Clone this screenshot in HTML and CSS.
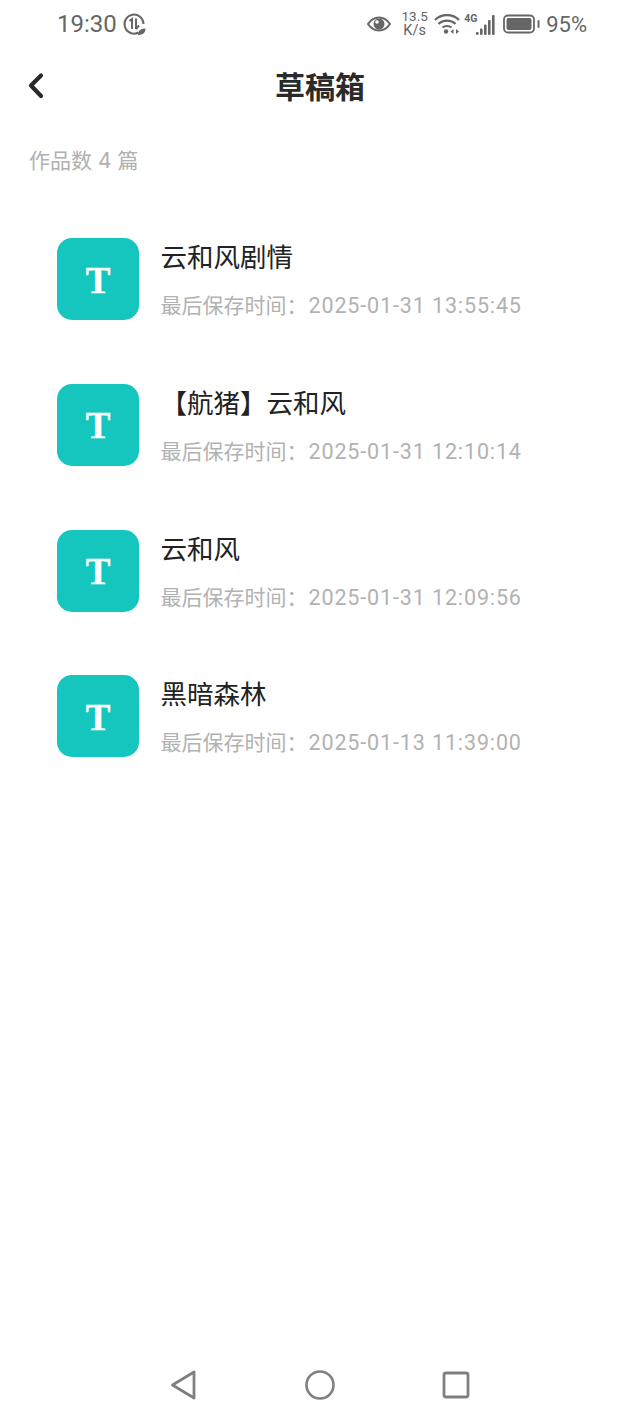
FILE: index.html
```html
<!DOCTYPE html>
<html lang="zh">
<head>
<meta charset="utf-8">
<title>草稿箱</title>
<link rel="stylesheet" href="styles.css">
</head>
<body>
<div class="page">
  <div class="status">
    <div class="status-left">
      <span class="time">19:30</span>
      <svg class="ic-clock" width="24" height="24" viewBox="0 0 24 24"><path d="M16.500 20.500A9.500 9.500 0 1 1 21.500 12" fill="none" stroke="#666" stroke-width="2"/><path d="M7.500 9l2.500-2V17M14 6.500V17M14 17l3-3.500" fill="none" stroke="#666" stroke-width="2"/><path d="M16 23c0-4.500 3-6.500 7.500-6.500 0 4.500-3 6.500-7.500 6.500z" fill="#666"/></svg>
    </div>
    <div class="status-right">
      <svg class="ic-eye" width="26" height="18" viewBox="0 0 26 18"><path d="M2 9C5 4.500 8.500 2.500 13 2.500S21 4.500 24 9C21 13.500 17.500 15.500 13 15.500S5 13.500 2 9z" fill="none" stroke="#666" stroke-width="2"/><circle cx="13" cy="9" r="5.500" fill="#666"/><circle cx="11" cy="7" r="1.800" fill="#fff"/></svg>
      <span class="speed"><span class="speed-val">13.5</span><span class="speed-unit">K/s</span></span>
      <svg class="ic-wifi" width="26" height="24" viewBox="0 0 26 24"><path d="M1 8C7 1.500 19 1.500 25 8M4.500 12C9 7.500 17 7.500 21.500 12M8.500 15.500C11 13.500 15 13.500 17.500 15.500" fill="none" stroke="#666" stroke-width="2.200"/><circle cx="12" cy="19.500" r="2.200" fill="#666"/><path d="M16.500 19.500l3-2.500v5zM25 19.500l-3-2.500v5z" fill="#666"/></svg>
      <span class="net">
        <span class="net-label">4G</span>
        <svg width="20" height="21" viewBox="0 0 20 21"><g fill="#666"><rect x="0" y="17" width="2.600" height="3" rx="1"/><rect x="4" y="13.500" width="2.600" height="6.500" rx="1"/><rect x="8" y="9.500" width="2.600" height="10.500" rx="1"/><rect x="12" y="5" width="2.600" height="15" rx="1"/><rect x="16" y="0" width="2.600" height="20" rx="1"/></g></svg>
      </span>
      <svg class="ic-batt" width="37" height="20" viewBox="0 0 37 20"><rect x="1" y="1.500" width="30" height="17" rx="4" fill="none" stroke="#666" stroke-width="1.800"/><rect x="3.500" y="4" width="25" height="12" rx="2" fill="#666"/><rect x="34.500" y="6" width="2" height="8" rx="1" fill="#666"/></svg>
      <span class="batt">95%</span>
    </div>
  </div>

  <header class="nav">
    <svg class="back" width="18" height="28" viewBox="0 0 18 28"><path d="M14 3.500L4 13.500L14 24" fill="none" stroke="#2a2a2a" stroke-width="4.200" stroke-linecap="round" stroke-linejoin="round"/></svg>
    <h1 class="title">草稿箱</h1>
  </header>

  <p class="count">作品数 4 篇</p>

  <ul class="list">
    <li class="item">
      <div class="thumb">T</div>
      <div class="info"><div class="name">云和风剧情</div><div class="meta">最后保存时间：<span class="stamp">2025-01-31 13:55:45</span></div></div>
    </li>
    <li class="item">
      <div class="thumb">T</div>
      <div class="info"><div class="name">【航猪】云和风</div><div class="meta">最后保存时间：<span class="stamp">2025-01-31 12:10:14</span></div></div>
    </li>
    <li class="item">
      <div class="thumb">T</div>
      <div class="info"><div class="name">云和风</div><div class="meta">最后保存时间：<span class="stamp">2025-01-31 12:09:56</span></div></div>
    </li>
    <li class="item">
      <div class="thumb">T</div>
      <div class="info"><div class="name">黑暗森林</div><div class="meta">最后保存时间：<span class="stamp">2025-01-13 11:39:00</span></div></div>
    </li>
  </ul>

  <div class="softnav">
    <svg width="28" height="32" viewBox="0 0 28 32"><path d="M2.500 16L24 3V29z" fill="none" stroke="#808080" stroke-width="2.800" stroke-linejoin="round"/></svg>
    <svg width="30" height="30" viewBox="0 0 30 30"><circle cx="15" cy="15" r="13.500" fill="none" stroke="#808080" stroke-width="2.600"/></svg>
    <svg width="28" height="28" viewBox="0 0 28 28"><rect x="2" y="2" width="24" height="24" rx="2" fill="none" stroke="#808080" stroke-width="2.800"/></svg>
  </div>
</div>
</body>
</html>
```
FILE: styles.css
```css
* { box-sizing: border-box; }
html, body { margin: 0; padding: 0; background: #fff; }
body { font-family: Roboto, "Noto Sans CJK SC", "Noto Sans", sans-serif; }
.page { width: 640px; height: 1422px; display: flex; flex-direction: column; position: relative; overflow: hidden; }
.status { height: 48px; padding: 0 53px 0 57px; display: flex; justify-content: space-between; align-items: center; color: #666; }
.status-left { display: flex; align-items: center; gap: 5px; }
.time { font-size: 24px; line-height: 48px; }
.status-right { display: flex; align-items: center; }
.speed { display: flex; flex-direction: column; align-items: center; width: 27px; margin-left: 9px; }
.speed-val { font-size: 13.500px; line-height: 13.500px; }
.speed-unit { font-size: 14.500px; line-height: 14px; }
.ic-wifi { margin-left: 6px; }
.net { position: relative; display: flex; align-items: flex-end; width: 32px; height: 24px; margin-left: 4px; justify-content: flex-end; }
.net-label { position: absolute; left: 0; top: 1px; font-size: 10.500px; font-weight: 700; line-height: 11px; }
.ic-batt { margin-left: 7px; }
.batt { font-size: 22px; margin-left: 6px; }
.nav { height: 78px; position: relative; display: flex; align-items: center; justify-content: center; }
.back { position: absolute; left: 27px; top: 24px; }
.title { margin: 0; padding-top: 2px; font-size: 30px; font-weight: 700; color: #2a2a2a; line-height: 78px; }
.count { margin: 20px 0 0 29px; font-family: Inter, "Noto Sans CJK SC", sans-serif; font-size: 21px; line-height: 30px; color: #b0b0b0; }
.list { list-style: none; margin: 62px 0 0 0; padding: 0 0 0 57px; display: flex; flex-direction: column; gap: 63.800px; }
.item { display: flex; align-items: center; gap: 21.500px; height: 82px; }
.thumb { width: 82px; height: 82px; padding-top: 2px; border-radius: 15px; background: #14c6bd; color: #fff; font-family: "Liberation Serif", serif; font-weight: 700; font-size: 37px; display: flex; align-items: center; justify-content: center; -webkit-text-stroke: 0.4px #fff; }
.info { display: flex; flex-direction: column; gap: 17px; padding-top: 5px; }
.name { font-size: 26.500px; line-height: 32px; color: #222; }
.meta { font-size: 21px; line-height: 30px; color: #b2b2b2; }
.stamp { font-size: 21.500px; letter-spacing: 0.870px; margin-left: 1px; }
.softnav { position: absolute; left: 170px; top: 1369px; width: 300px; display: flex; justify-content: space-between; align-items: center; }
```
